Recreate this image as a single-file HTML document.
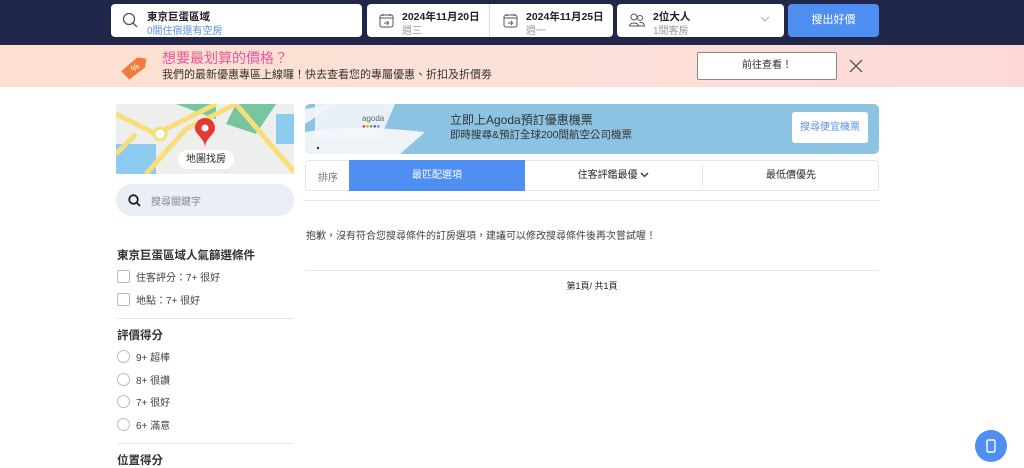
<!DOCTYPE html>
<html><head><meta charset="utf-8"><style>
*{box-sizing:border-box;margin:0;padding:0}
body{width:1024px;height:464px;overflow:hidden;background:#fff;font-family:"Liberation Sans","Noto Sans CJK TC",sans-serif;color:#2a2a2e;position:relative}
.hdr{position:absolute;left:0;top:0;width:1024px;height:45px;background:#20274a}
.box{position:absolute;top:4px;height:33px;background:#fff;border-radius:4px}
.t1{font-size:10.5px;font-weight:bold;color:#222;position:absolute}
.t2{font-size:10px;color:#999;position:absolute}
.promo{position:absolute;top:45px;left:0;width:1024px;height:42px;background:linear-gradient(90deg,#fde0cf,#fde0d9 60%,#fcd9d6)}
.abs{position:absolute}
.cb{position:absolute;left:117px;width:13px;height:13px;border:1px solid #bbb;border-radius:2px}
.rd{position:absolute;left:117px;width:13px;height:13px;border:1px solid #bbb;border-radius:50%}
.lb{position:absolute;left:136px;font-size:10px;color:#444;margin-top:-1px}
.h{position:absolute;left:117px;font-size:11.5px;font-weight:bold;color:#333}
.hr{position:absolute;left:117px;width:177px;height:1px;background:#e6e6e6}
</style></head><body>
<div class="hdr">
 <div class="box" style="left:111px;width:251px">
  <svg class="abs" style="left:11px;top:8px" width="16" height="16" viewBox="0 0 16 16"><circle cx="7" cy="7" r="5.5" fill="none" stroke="#555" stroke-width="1.3"/><path d="M11 11l4 4" stroke="#555" stroke-width="1.3"/></svg>
  <div class="t1" style="left:36px;top:5px">東京巨蛋區域</div>
  <div class="t2" style="left:36px;top:18px;color:#5a8ee8">0間住宿還有空房</div>
 </div>
 <div class="box" style="left:367px;width:246px">
  <svg class="abs" style="left:12px;top:9px" width="15" height="15" viewBox="0 0 15 15"><rect x="1" y="2" width="13" height="12" rx="2" fill="none" stroke="#555"/><path d="M1 5h13M4 1v2M11 1v2M5 10h4M8 8l1.5 2L8 12" stroke="#555" fill="none"/></svg>
  <div class="t1" style="left:35px;top:5px">2024年11月20日</div>
  <div class="t2" style="left:35px;top:18px">週三</div>
  <div class="abs" style="left:122px;top:0;width:1px;height:33px;background:#ddd"></div>
  <svg class="abs" style="left:136px;top:9px" width="15" height="15" viewBox="0 0 15 15"><rect x="1" y="2" width="13" height="12" rx="2" fill="none" stroke="#555"/><path d="M1 5h13M4 1v2M11 1v2M5 10h4M8 8l1.5 2L8 12" stroke="#555" fill="none"/></svg>
  <div class="t1" style="left:159px;top:5px">2024年11月25日</div>
  <div class="t2" style="left:159px;top:18px">週一</div>
 </div>
 <div class="box" style="left:617px;width:167px">
  <svg class="abs" style="left:12px;top:9px" width="16" height="14" viewBox="0 0 16 14"><circle cx="5" cy="4" r="3" fill="none" stroke="#555"/><path d="M0.5 13c0-4 9-4 9 0z" fill="none" stroke="#555"/><circle cx="11" cy="5" r="2.5" fill="none" stroke="#555"/><path d="M10 13h5.5c0-3-3-4-5-3.5" fill="none" stroke="#555"/></svg>
  <div class="t1" style="left:36px;top:5px">2位大人</div>
  <div class="t2" style="left:36px;top:18px">1間客房</div>
  <svg class="abs" style="left:143px;top:12px" width="10" height="7"><path d="M1 1l4 4 4-4" stroke="#aaa" fill="none"/></svg>
 </div>
 <div class="box" style="left:788px;width:91px;background:#4f8ff2;color:#fff;font-size:11px;text-align:center;line-height:33px">搜出好價</div>
</div>
<div class="promo">
 <svg class="abs" style="left:118px;top:8px" width="32" height="28" viewBox="0 0 32 28"><path d="M4 20L18 4l9 0 0 9-14 14z" fill="#f07c3c" transform="rotate(8 16 14)"/><text x="14" y="20" font-size="9" fill="#fff" transform="rotate(-40 14 17)">%</text></svg>
 <div class="abs" style="left:162px;top:3px;font-size:14px;color:#e9579a">想要最划算的價格？</div>
 <div class="abs" style="left:162px;top:21px;font-size:11px;color:#333">我們的最新優惠專區上線囉！快去查看您的專屬優惠、折扣及折價劵</div>
 <div class="abs" style="left:697px;top:7px;width:140px;height:28px;background:#fff;border:1px solid #888;border-radius:2px;text-align:center;line-height:26px;font-size:10px">前往查看！</div>
 <svg class="abs" style="left:849px;top:14px" width="14" height="14"><path d="M1 1l12 12M13 1L1 13" stroke="#555" stroke-width="1.3"/></svg>
</div>
<div class="abs" style="left:116px;top:104px;width:178px;height:70px;background:#eeeeec;overflow:hidden;border-radius:2px">
 <svg width="178" height="70"><rect x="0" y="40" width="40" height="30" fill="#8ecbf0"/><path d="M60 0l40 0 0 15z" fill="#76c7a0"/><path d="M120 0h40l-20 30-30-10z" fill="#76c7a0"/><path d="M160 10h18v30h-18z" fill="#8ecbf0"/><path d="M0 10l40 20 60-30M30 70l40-45 50-25M120 0l60 70M0 50l20-20" stroke="#f7dd7b" stroke-width="5" fill="none"/><circle cx="44" cy="30" r="6" fill="#fff" stroke="#f7dd7b" stroke-width="3"/></svg>
 <svg class="abs" style="left:78px;top:14px" width="22" height="30" viewBox="0 0 22 30"><path d="M11 30C11 20 21 17 21 10A10 10 0 0 0 1 10C1 17 11 20 11 30z" fill="#e53935"/><circle cx="11" cy="10" r="3.5" fill="#fff"/></svg>
 <div class="abs" style="left:62px;top:46px;width:56px;height:19px;background:#fff;border-radius:10px;font-size:10px;text-align:center;line-height:19px">地圖找房</div>
</div>
<div class="abs" style="left:116px;top:184px;width:178px;height:32px;background:#eaeef7;border-radius:16px">
 <svg class="abs" style="left:12px;top:10px" width="13" height="13"><circle cx="5.5" cy="5.5" r="4.3" fill="none" stroke="#222" stroke-width="1.8"/><path d="M8.5 8.5l3.5 3.5" stroke="#222" stroke-width="1.8"/></svg>
 <div class="abs" style="left:35px;top:9px;font-size:10px;color:#888">搜尋關鍵字</div>
</div>
<div class="h" style="top:247px">東京巨蛋區域人氣篩選條件</div>
<div class="cb" style="top:270px"></div><div class="lb" style="top:270px">住客評分：7+ 很好</div>
<div class="cb" style="top:293px"></div><div class="lb" style="top:293px">地點：7+ 很好</div>
<div class="hr" style="top:318px"></div>
<div class="h" style="top:327px">評價得分</div>
<div class="rd" style="top:350px"></div><div class="lb" style="top:350px">9+ 超棒</div>
<div class="rd" style="top:373px"></div><div class="lb" style="top:373px">8+ 很讚</div>
<div class="rd" style="top:395px"></div><div class="lb" style="top:395px">7+ 很好</div>
<div class="rd" style="top:418px"></div><div class="lb" style="top:418px">6+ 滿意</div>
<div class="hr" style="top:443px"></div>
<div class="h" style="top:452px">位置得分</div>
<div class="abs" style="left:305px;top:104px;width:574px;height:50px;background:#8cc3e2;border-radius:5px;overflow:hidden">
 <svg class="abs" style="left:0;top:0" width="130" height="50"><path d="M0 5L30 0 0 20z" fill="#eaf2f8"/><path d="M0 28Q50 20 120 28L95 50H0z" fill="#eef3f7"/><path d="M10 0h80l-15 35H10z" fill="#f3f6f9" opacity=".9"/><circle cx="13" cy="44" r="1.2" fill="#333"/></svg>
 <div class="abs" style="left:57px;top:10px;font-size:8px;color:#666">agoda</div>
 <div class="abs" style="left:57px;top:20px;font-size:6px;"><span style="color:#e33">●</span><span style="color:#f90">●</span><span style="color:#4b4">●</span><span style="color:#a3c">●</span><span style="color:#39f">●</span></div>
 <div class="abs" style="left:145px;top:7px;font-size:12px;color:#333">立即上Agoda預訂優惠機票</div>
 <div class="abs" style="left:145px;top:23px;font-size:10.5px;color:#333">即時搜尋&amp;預訂全球200間航空公司機票</div>
 <div class="abs" style="left:487px;top:8px;width:76px;height:31px;background:#fff;border-radius:3px;text-align:center;line-height:31px;font-size:10px;color:#5a8ee8">搜尋便宜機票</div>
</div>
<div class="abs" style="left:305px;top:160px;width:574px;height:31px;border:1px solid #e6e6e6;border-radius:4px;font-size:10px">
 <div class="abs" style="left:12px;top:8px;color:#777">排序</div>
 <div class="abs" style="left:43px;top:-1px;width:176px;height:31px;background:#4f8ff2;color:#fff;text-align:center;line-height:31px">最匹配選項</div>
 <div class="abs" style="left:219px;top:0;width:177px;height:29px;text-align:center;line-height:29px">住客評鑑最優 <svg width="9" height="6"><path d="M1 1l3.5 3.5L8 1" stroke="#333" fill="none" stroke-width="1.3"/></svg></div>
 <div class="abs" style="left:396px;top:4px;width:1px;height:21px;background:#e6e6e6"></div>
 <div class="abs" style="left:397px;top:0;width:176px;height:29px;text-align:center;line-height:29px">最低價優先</div>
</div>
<div class="abs" style="left:305px;top:200px;width:574px;height:1px;background:#e6e6e6"></div>
<div class="abs" style="left:306px;top:227px;font-size:10px;color:#444">抱歉，沒有符合您搜尋條件的訂房選項，建議可以修改搜尋條件後再次嘗試喔！</div>
<div class="abs" style="left:305px;top:270px;width:574px;height:1px;background:#e6e6e6"></div>
<div class="abs" style="left:305px;top:279px;width:574px;text-align:center;font-size:9px;color:#222">第1頁/ 共1頁</div>
<div class="abs" style="left:975px;top:430px;width:32px;height:32px;border-radius:50%;background:#4f8ff2">
 <svg class="abs" style="left:11px;top:9px" width="10" height="14"><rect x="1" y="1" width="8" height="12" rx="1.5" fill="none" stroke="#fff" stroke-width="1.4"/></svg>
</div>
</body></html>
